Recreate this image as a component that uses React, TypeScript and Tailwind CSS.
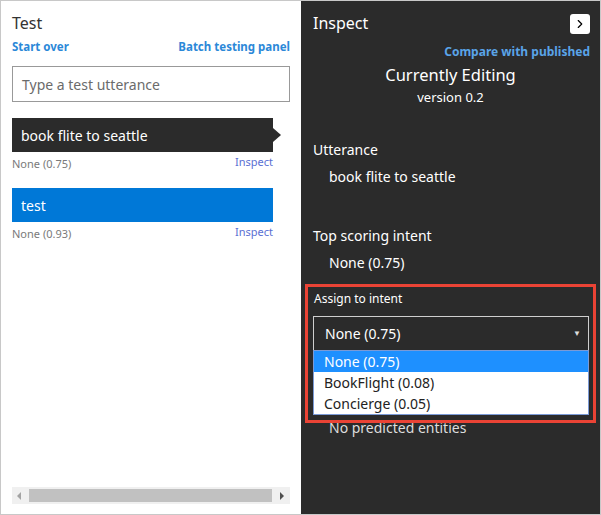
import { ChevronRight } from "lucide-react";

const font = { fontFamily: '"Segoe UI", "Noto Sans", sans-serif' };

function UtteranceItem({
  text,
  score,
  active,
}: {
  text: string;
  score: string;
  active?: boolean;
}) {
  return (
    <div className="flex flex-col">
      <div className="relative w-[261px]">
        <div
          className={`flex h-[34px] items-center pl-[9px] text-[14px] text-white ${
            active ? "bg-[#2b2b2b]" : "bg-[#0078d7]"
          }`}
        >
          {text}
        </div>
        {active && (
          <div className="absolute right-[-8px] top-[10px] h-0 w-0 border-y-[7px] border-l-[8px] border-y-transparent border-l-[#2b2b2b]" />
        )}
      </div>
      <div className="mt-[5px] flex w-[261px] items-start justify-between text-[11px] leading-[14px]">
        <span className="text-[#7a7a7a]">{score}</span>
        <span className="text-[#5a6fd3] leading-[10px]">Inspect</span>
      </div>
    </div>
  );
}

export default function App() {
  return (
    <div
      className="flex h-[515px] w-[601px] border border-[#c8c8c8] bg-white"
      style={font}
    >
      {/* left: test panel */}
      <div className="flex w-[300px] flex-col pl-[11px] pr-[11px]">
        <div className="mt-[11px] text-[16px] leading-[22px] text-[#333]">Test</div>
        <div className="mt-[6px] flex justify-between text-[11.5px] font-bold leading-[14px] text-[#2b88d8]">
          <span>Start over</span>
          <span>Batch testing panel</span>
        </div>
        <div className="mt-[12px] flex h-[36px] w-[278px] items-center border border-[#999] pl-[9px] text-[14px] text-[#6b6b6b]">
          Type a test utterance
        </div>
        <div className="mt-[16px] flex flex-col gap-[17px]">
          <UtteranceItem text="book flite to seattle" score="None (0.75)" active />
          <UtteranceItem text="test" score="None (0.93)" />
        </div>
        <div className="flex-1" />
        <div className="mb-[10px] flex h-[17px] w-[278px] items-center bg-[#f0f0f0]">
          <div className="ml-[5px] h-0 w-0 border-y-[4px] border-r-[4px] border-y-transparent border-r-[#a3a3a3]" />
          <div className="ml-[8px] h-[13px] w-[243px] bg-[#c1c1c1]" />
          <div className="ml-[8px] h-0 w-0 border-y-[4px] border-l-[4px] border-y-transparent border-l-[#505050]" />
        </div>
      </div>

      {/* right: inspect panel */}
      <div className="flex flex-1 flex-col bg-[#2b2b2b] text-white">
        <div className="mt-[11px] flex items-start justify-between pl-[12px] pr-[10px]">
          <span className="text-[16px] leading-[22px]">Inspect</span>
          <div className="mt-[2px] flex h-[20px] w-[20px] items-center justify-center rounded-[3px] bg-white">
            <ChevronRight className="h-[14px] w-[14px] text-black" strokeWidth={2} />
          </div>
        </div>
        <div className="mt-[10px] pr-[10px] text-right text-[12px] font-bold leading-[15px] text-[#5aa4e8]">
          Compare with published
        </div>
        <div className="mt-[5px] text-center text-[16.5px] leading-[22px]">Currently Editing</div>
        <div className="mt-[2px] text-center text-[13px] leading-[18px]">version 0.2</div>

        <div className="mt-[34px] pl-[12px] text-[14px] leading-[20px]">Utterance</div>
        <div className="mt-[7px] pl-[28px] text-[14px] leading-[20px]">book flite to seattle</div>

        <div className="mt-[39px] pl-[12px] text-[14px] leading-[20px]">Top scoring intent</div>
        <div className="mt-[7px] pl-[28px] text-[14px] leading-[20px]">None (0.75)</div>

        <div className="relative mt-[11px] ml-[4px] mr-[4px]">
          <div className="h-[139px] border-[3px] border-[#ea4335] pl-[5px] pr-[4px]">
            <div className="mt-[4px] pl-[1px] text-[12px] leading-[16px]">Assign to intent</div>
            <div className="relative mt-[9px] flex h-[35px] items-center border border-[#cfcfcf] pl-[11px] text-[14px]">
              None (0.75)
              <span className="absolute right-[7px] top-[10px] text-[8px] text-[#ddd]">▼</span>
              <div className="absolute left-[-1px] right-[-1px] top-full z-10 border border-[#7b9ad6] bg-white text-[14px] leading-[21px] text-[#222]">
                <div className="bg-[#1e90ff] pl-[10px] text-white">None (0.75)</div>
                <div className="pl-[10px]">BookFlight (0.08)</div>
                <div className="pl-[10px]">Concierge (0.05)</div>
              </div>
            </div>
          </div>
        </div>
        <div className="mt-[-5px] pl-[28px] text-[14px] leading-[20px] text-[#ddd]">No predicted entities</div>
      </div>
    </div>
  );
}
